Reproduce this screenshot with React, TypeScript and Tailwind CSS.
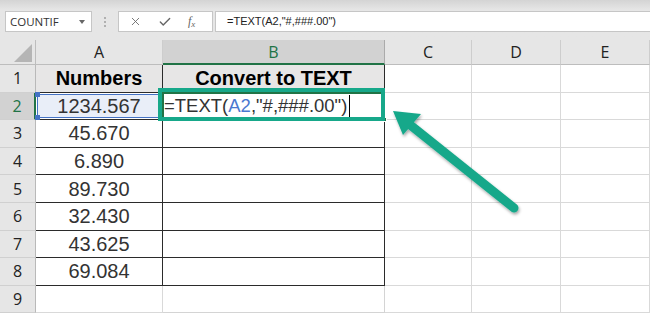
import { X, Check } from "lucide-react";

const cols = ["A", "B", "C", "D", "E"];
const numbers = ["1234.567", "45.670", "6.890", "89.730", "32.430", "43.625", "69.084"];

const sans = "font-['Liberation_Sans',Arial,sans-serif]";
const ui = "font-['Open_Sans','Noto_Sans',sans-serif]";

function RowHeader({ n }: { n: number }) {
  const active = n === 2;
  return (
    <div
      className={`h-[27.6px] flex items-center justify-center border-b border-[#d0d0d0] text-[16px] ${ui} ${
        active
          ? "bg-[#d2d2d2] border-r-2 border-r-[#217346] text-[#217346]"
          : "bg-[#e6e6e6] border-r border-r-[#b9b9b9] text-[#222]"
      }`}
    >
      {n}
    </div>
  );
}

function Cell({ row, col }: { row: number; col: number }) {
  const inTable = row <= 8 && col <= 1;
  const border = inTable
    ? "border-r border-b border-[#2b2b2b]"
    : col === 1 && row === 9
      ? "border-r border-b border-r-[#d4d4d4] border-b-[#d4d4d4]"
      : col === 1
        ? "border-r border-b border-r-[#2b2b2b] border-b-[#d4d4d4]"
        : "border-r border-b border-[#d9d9d9]";
  const bg = row === 1 && col <= 1 ? "bg-[#e7e6e6]" : "bg-white";

  let content: React.ReactNode = null;
  if (row === 1 && col === 0) content = <span className="font-bold text-black">Numbers</span>;
  if (row === 1 && col === 1) content = <span className="font-bold text-black">Convert to TEXT</span>;
  if (row >= 2 && row <= 8 && col === 0)
    content = <span className="text-[#333]">{numbers[row - 2]}</span>;

  if (row === 2 && col === 0) {
    return (
      <div className={`relative h-[27.6px] ${border} bg-white`}>
        <div className="absolute inset-[1px] bg-[#e9eef8] border border-[#4472c4] flex items-center justify-center text-[20px] text-[#333]">
          {numbers[0]}
          <span className="absolute -left-[3px] -top-[3px] w-[5px] h-[5px] bg-[#4472c4]" />
          <span className="absolute -right-[3px] -top-[3px] w-[5px] h-[5px] bg-[#4472c4]" />
          <span className="absolute -left-[3px] -bottom-[3px] w-[5px] h-[5px] bg-[#4472c4]" />
          <span className="absolute -right-[3px] -bottom-[3px] w-[5px] h-[5px] bg-[#4472c4]" />
        </div>
      </div>
    );
  }

  if (row === 2 && col === 1) {
    return (
      <div className={`relative h-[27.6px] ${border} bg-white flex items-center pl-[1px] text-[18.5px] text-[#333]`}>
        <span>=TEXT(</span>
        <span className="text-[#4a78d0]">A2</span>
        <span>,"#,###.00")</span>
        <span className="ml-[2px] w-[1px] h-[22px] bg-black" />
        <div className="absolute -left-[1px] -top-[1px] -right-[1px] -bottom-[1px] border-2 border-[#217346]" />
        <span className="absolute -right-[3px] -bottom-[3px] w-[5px] h-[5px] bg-[#217346] border border-white" />
      </div>
    );
  }

  return (
    <div className={`h-[27.6px] flex items-center justify-center text-[20px] ${border} ${bg}`}>
      {content}
    </div>
  );
}

export default function App() {
  return (
    <div className={`relative w-[650px] h-[316px] overflow-hidden bg-white ${sans}`}>
      {/* Formula bar */}
      <div className="h-[40px] bg-gradient-to-b from-[#d4d4d4] via-[#e6e6e6] via-[25%] to-[#e6e6e6] flex items-start pt-[11px] pl-[5px]">
        <div className="w-[87px] h-[21px] bg-white border border-[#c6c6c6] flex items-center justify-between pl-[4px] pr-[6px]">
          <span className={`text-[11.5px] text-[#333] ${ui}`}>COUNTIF</span>
          <span className="w-0 h-0 border-l-[3.5px] border-r-[3.5px] border-t-[4px] border-l-transparent border-r-transparent border-t-[#666]" />
        </div>
        <div className="w-[26px] h-[21px] flex flex-col items-center justify-center gap-[2px]">
          <span className="w-[2px] h-[2px] bg-[#b0b0b0]" />
          <span className="w-[2px] h-[2px] bg-[#b0b0b0]" />
          <span className="w-[2px] h-[2px] bg-[#b0b0b0]" />
        </div>
        <div className="w-[95px] h-[21px] bg-white border border-[#c6c6c6] flex items-center pl-[10px] gap-[16px]">
          <X size={13} strokeWidth={1.6} className="text-[#666]" />
          <Check size={14} strokeWidth={2.4} className="text-[#666]" />
          <span className="font-['Liberation_Serif',serif] italic text-[12px] text-[#666] leading-none">
            f<span className="text-[9px] align-[-2px]">x</span>
          </span>
        </div>
        <div className="ml-[2px] flex-1 h-[21px] bg-white border border-[#c6c6c6] border-r-0 flex items-center pl-[11px]">
          <span className="text-[11px] text-[#222]">=TEXT(A2,"#,###.00")</span>
        </div>
      </div>

      {/* Sheet grid */}
      <div className="grid grid-cols-[36px_127px_222px_87px_89px_89px]">
        <div className="h-[25px] bg-[#e6e6e6] border-r border-b border-[#bdbdbd] flex items-end justify-end pr-[3px] pb-[2px]">
          <svg width="18" height="18" viewBox="0 0 18 18">
            <polygon points="18,0 18,18 0,18" fill="#b5b5b5" />
          </svg>
        </div>
        {cols.map((c) => (
          <div
            key={c}
            className={`h-[25px] flex items-center justify-center text-[16px] ${ui} border-r ${
              c === "B"
                ? "bg-[#d2d2d2] border-r-[#ababab] border-b-2 border-b-[#217346] text-[#217346]"
                : "bg-[#e6e6e6] border-r-[#cdcdcd] border-b border-b-[#bdbdbd] text-[#222]"
            }`}
          >
            {c}
          </div>
        ))}
        {Array.from({ length: 9 }, (_, i) => i + 1).map((r) => [
          <RowHeader key={`h${r}`} n={r} />,
          ...cols.map((_, ci) => <Cell key={`${r}-${ci}`} row={r} col={ci} />),
        ])}
      </div>

      {/* Annotation box */}
      <div className="absolute left-[158px] top-[88px] w-[227px] h-[33px] border-[4px] border-[#17a88a]" />

      {/* Annotation arrow */}
      <svg className="absolute left-0 top-0 pointer-events-none" width="650" height="316">
        <defs>
          <filter id="sh" x="-20%" y="-20%" width="140%" height="140%">
            <feDropShadow dx="1" dy="2" stdDeviation="1.5" floodColor="#000" floodOpacity="0.35" />
          </filter>
        </defs>
        <g filter="url(#sh)">
          <line x1="409" y1="124" x2="514" y2="208" stroke="#17a88a" strokeWidth="9" strokeLinecap="round" />
          <polygon points="393,111 421,114 403,135" fill="#17a88a" />
        </g>
      </svg>
    </div>
  );
}
